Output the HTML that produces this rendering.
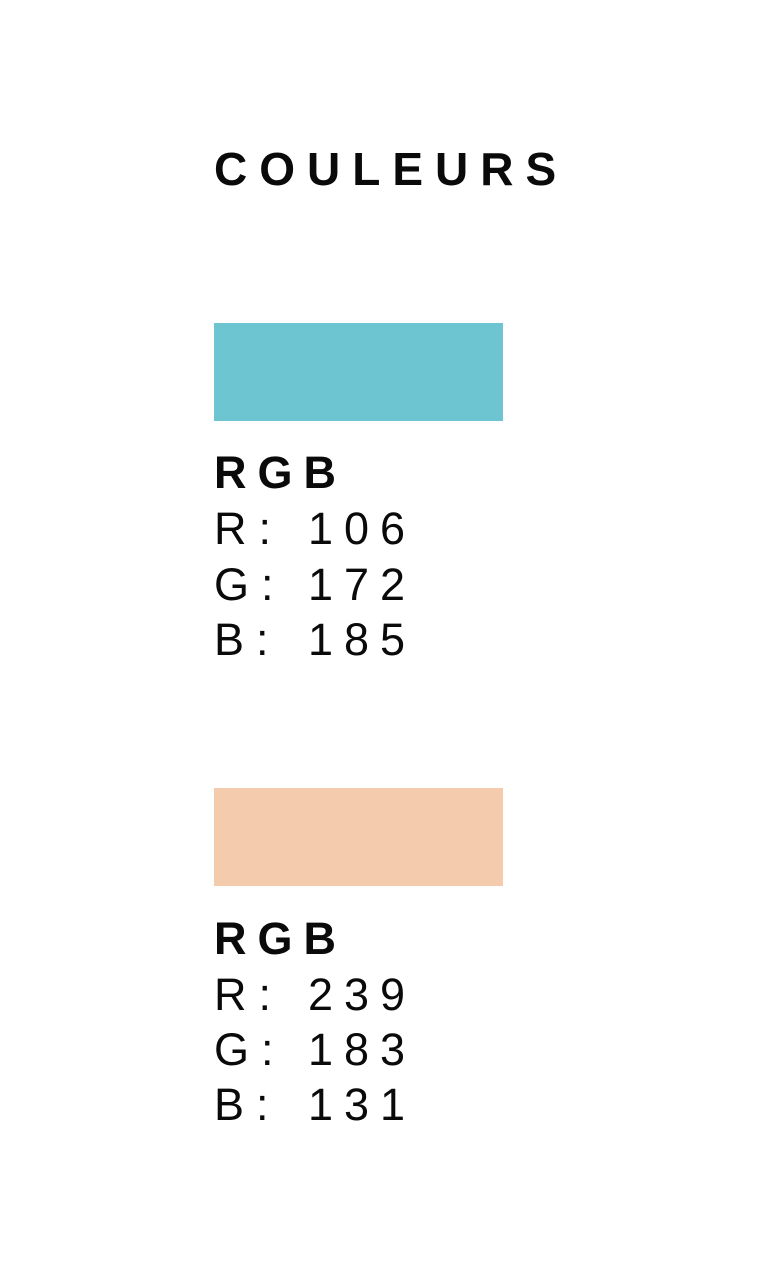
<!DOCTYPE html>
<html><head><meta charset="utf-8"><style>
body{margin:0;width:758px;height:1270px;background:#fff;position:relative;overflow:hidden;font-family:"Liberation Sans",sans-serif;color:#0a0a0a}
div{position:absolute;line-height:1;white-space:pre}
.t{left:214px;top:146px;font-size:46px;font-weight:bold;letter-spacing:12px}
.h{left:214px;font-size:45px;font-weight:bold;letter-spacing:11px}
.l{left:214px;font-size:45px;letter-spacing:12px}
.n{left:308px;font-size:45px;letter-spacing:11px}
.r{left:214px;width:289px;height:98px}
</style></head><body>
<div class="t">COULEURS</div>
<div class="r" style="top:323px;background:#6cc5d1"></div>
<div class="h" style="top:450px">RGB</div>
<div class="l" style="top:506px">R:</div><div class="n" style="top:506px">106</div>
<div class="l" style="top:562px">G:</div><div class="n" style="top:562px">172</div>
<div class="l" style="top:617px">B:</div><div class="n" style="top:617px">185</div>
<div class="r" style="top:788px;background:#f4cbad"></div>
<div class="h" style="top:916px">RGB</div>
<div class="l" style="top:972px">R:</div><div class="n" style="top:972px">239</div>
<div class="l" style="top:1027px">G:</div><div class="n" style="top:1027px">183</div>
<div class="l" style="top:1082px">B:</div><div class="n" style="top:1082px">131</div>
</body></html>
